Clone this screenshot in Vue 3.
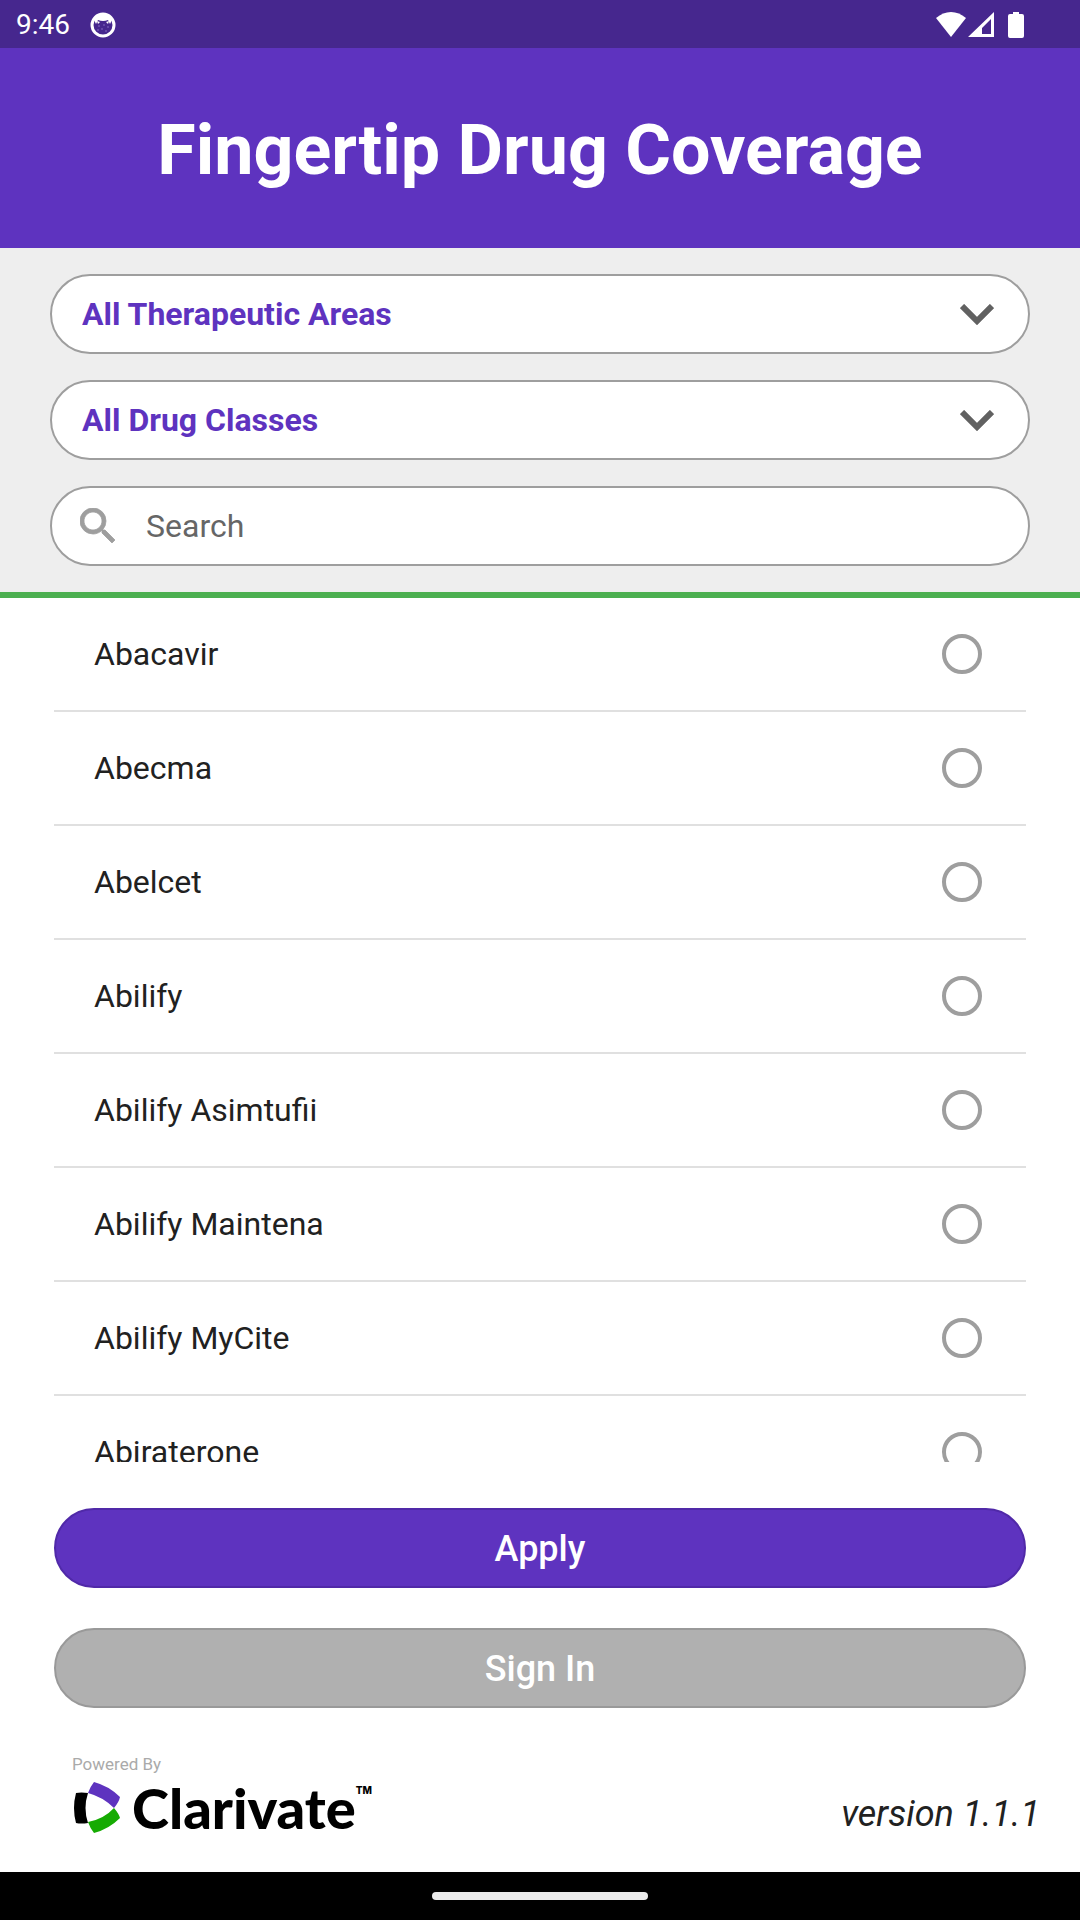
<script setup>
import { ref } from 'vue'

const area = ref('all')
const drugClass = ref('all')
const query = ref('')
const selected = ref('')

const drugs = [
  'Abacavir',
  'Abecma',
  'Abelcet',
  'Abilify',
  'Abilify Asimtufii',
  'Abilify Maintena',
  'Abilify MyCite',
  'Abiraterone',
]
</script>

<template>
  <div class="screen">
    <div class="status">
      <span class="clock">9:46</span>
      <svg class="cat" viewBox="0 0 26 26" aria-hidden="true">
        <circle cx="13" cy="13" r="11" fill="none" stroke="#fff" stroke-width="3" />
        <path d="M4 8Q7 2 13 2t9 6l-2 4-2-4q-5 2-10 0l-2 4z" fill="#fff" />
        <path d="M7 9l1 3 2-2zM19 9l-1 3-2-2z" fill="#fff" />
        <g fill="#8a70c8">
          <circle cx="9" cy="14" r=".8" /><circle cx="14" cy="13" r=".8" />
          <circle cx="18" cy="15" r=".8" /><circle cx="12" cy="17" r=".8" />
          <circle cx="16" cy="19" r=".8" /><circle cx="8" cy="18" r=".8" />
        </g>
      </svg>
      <div class="signals">
        <svg width="30" height="26" viewBox="0 0 30 26" aria-hidden="true">
          <path d="M0 6Q7 0 15 0t15 6L15 25z" fill="#fff" />
        </svg>
        <svg width="26" height="26" viewBox="0 0 26 26" aria-hidden="true">
          <path d="M26 0v25H0zM23 7l-9 9v6h9z" fill="#fff" fill-rule="evenodd" />
        </svg>
        <svg class="battery" width="16" height="26" viewBox="0 0 16 26" aria-hidden="true">
          <path d="M5 0h6v2h3q2 0 2 2v20q0 2-2 2H2q-2 0-2-2V4q0-2 2-2h3z" fill="#fff" />
        </svg>
      </div>
    </div>

    <header class="header">
      <h1>Fingertip Drug Coverage</h1>
    </header>

    <form class="filters" @submit.prevent>
      <div class="field">
        <select v-model="area" aria-label="Therapeutic area">
          <option value="all">All Therapeutic Areas</option>
        </select>
        <svg class="chevron" viewBox="0 0 34 21" aria-hidden="true">
          <path d="M2 2l15 15L32 2" fill="none" stroke="#616161" stroke-width="6" />
        </svg>
      </div>
      <div class="field">
        <select v-model="drugClass" aria-label="Drug class">
          <option value="all">All Drug Classes</option>
        </select>
        <svg class="chevron" viewBox="0 0 34 21" aria-hidden="true">
          <path d="M2 2l15 15L32 2" fill="none" stroke="#616161" stroke-width="6" />
        </svg>
      </div>
      <div class="field search">
        <svg class="lens" viewBox="3 3 18 18" aria-hidden="true">
          <path
            fill="#9e9e9e"
            stroke="#9e9e9e"
            stroke-width=".4"
            d="M15.5 14h-.79l-.28-.27A6.47 6.47 0 0 0 16 9.5 6.5 6.5 0 1 0 9.5 16c1.61 0 3.09-.59 4.23-1.57l.27.28v.79l5 4.99L20.49 19l-4.99-5zm-6 0C7.01 14 5 11.99 5 9.5S7.01 5 9.5 5 14 7.01 14 9.5 11.99 14 9.5 14z"
          />
        </svg>
        <input v-model="query" type="text" placeholder="Search" aria-label="Search" />
      </div>
    </form>

    <ul class="list">
      <li v-for="drug in drugs" :key="drug">
        <label class="row">
          <span>{{ drug }}</span>
          <input v-model="selected" type="radio" name="drug" :value="drug" />
        </label>
      </li>
    </ul>

    <div class="actions">
      <button type="button" class="apply">Apply</button>
      <button type="button" class="signin">Sign In</button>
    </div>

    <footer class="footer">
      <div class="brand">
        <span class="powered">Powered By</span>
        <div class="logo">
          <svg width="46" height="52" viewBox="0 0 46 52" aria-hidden="true">
            <path d="M2 11Q7 10 14 11Q9 26 14 41Q7 42 2 41Q-2 26 2 11z" fill="#000" />
            <path d="M20 0Q35 4 46 15Q45 20 40 26Q29 15 14 11Q16 5 20 0z" fill="#5e33bf" />
            <path d="M40 26Q45 32 46 36Q35 47 20 51Q16 46 14 40Q30 37 40 26z" fill="#16ab03" />
          </svg>
          <span class="wordmark">Clarivate</span>
          <span class="tm">TM</span>
        </div>
      </div>
      <span class="version">version 1.1.1</span>
    </footer>

    <div class="navbar"><div class="pill"></div></div>
  </div>
</template>

<style>
body {
  margin: 0;
}
</style>

<style scoped>
.screen {
  display: flex;
  flex-direction: column;
  height: 100vh;
  background: #fff;
  color: #212121;
  font-family: Roboto, 'Liberation Sans', sans-serif;
  font-size: 32px;
}
.screen * {
  box-sizing: border-box;
}
.status {
  display: flex;
  align-items: center;
  flex: none;
  height: 48px;
  padding: 2px 56px 0 16px;
  background: #46278e;
  color: #fff;
}
.clock {
  font-size: 28px;
  line-height: 46px;
}
.cat {
  width: 26px;
  height: 26px;
  margin-left: 20px;
}
.signals {
  display: flex;
  gap: 2px;
  margin-left: auto;
}
.battery {
  margin-left: 12px;
}
.header {
  display: flex;
  align-items: center;
  justify-content: center;
  flex: none;
  height: 200px;
  padding-top: 4px;
  background: #5e33bf;
  color: #fff;
}
h1 {
  margin: 0;
  font-size: 70px;
  font-weight: 700;
  line-height: 80px;
}
.filters {
  display: flex;
  flex-direction: column;
  flex: none;
  gap: 26px;
  padding: 26px 50px;
  background: #eee;
  border-bottom: 6px solid #4caf50;
}
.field {
  position: relative;
  display: flex;
  align-items: center;
  height: 80px;
  background: #fff;
  border: 2px solid #9e9e9e;
  border-radius: 40px;
  overflow: hidden;
}
select {
  appearance: none;
  width: 100%;
  height: 100%;
  padding: 0 80px 0 30px;
  border: 0;
  background: none;
  color: #5e33bf;
  font: inherit;
  font-weight: 700;
}
.chevron {
  position: absolute;
  right: 34px;
  width: 34px;
  height: 21px;
  pointer-events: none;
}
.lens {
  flex: none;
  width: 36px;
  height: 36px;
  margin: 0 30px 0 28px;
}
.search input {
  flex: 1;
  height: 100%;
  padding: 0;
  border: 0;
  background: none;
  color: #212121;
  font: inherit;
  outline: none;
}
.search input::placeholder {
  color: #666;
}
.list {
  flex: 1;
  min-height: 0;
  margin: 0 54px;
  padding: 0;
  list-style: none;
  overflow-y: auto;
  scrollbar-width: none;
}
.row {
  display: flex;
  align-items: center;
  justify-content: space-between;
  height: 114px;
  padding: 0 44px 0 40px;
  border-bottom: 2px solid #e0e0e0;
}
.row input {
  appearance: none;
  width: 40px;
  height: 40px;
  margin: 0;
  border: 4px solid #9e9e9e;
  border-radius: 50%;
}
.row input:checked {
  border-color: #5e33bf;
  background: radial-gradient(#5e33bf 50%, #fff 55%);
}
.actions {
  display: flex;
  flex-direction: column;
  flex: none;
  gap: 40px;
  padding: 46px 54px 0;
}
.actions button {
  height: 80px;
  padding: 2px 0 0;
  border: 2px solid;
  border-radius: 40px;
  color: #fff;
  font: inherit;
  font-size: 36px;
  font-weight: 500;
}
.actions .apply {
  background: #5e33bf;
  border-color: #5029a8;
}
.actions .signin {
  background: #b0b0b0;
  border-color: #999;
}
.footer {
  display: flex;
  align-items: flex-start;
  justify-content: space-between;
  flex: none;
  height: 164px;
  padding: 44px 40px 0 72px;
}
.powered {
  display: block;
  color: #aaa;
  font-size: 17px;
  line-height: 24px;
}
.logo {
  display: flex;
  align-items: center;
  height: 64px;
  padding-left: 2px;
  color: #000;
}
.wordmark {
  margin-left: 12px;
  font-family: Lato, sans-serif;
  font-size: 56px;
  font-weight: 900;
  line-height: 64px;
}
.tm {
  align-self: flex-start;
  font-family: Inter, sans-serif;
  font-size: 10px;
  font-weight: 800;
  line-height: 28px;
}
.version {
  margin-top: 41px;
  font-size: 36px;
  font-style: italic;
  line-height: 42px;
}
.navbar {
  display: flex;
  align-items: center;
  justify-content: center;
  flex: none;
  height: 48px;
  background: #000;
}
.pill {
  width: 20%;
  height: 8px;
  border-radius: 4px;
  background: #ebebeb;
}
</style>
